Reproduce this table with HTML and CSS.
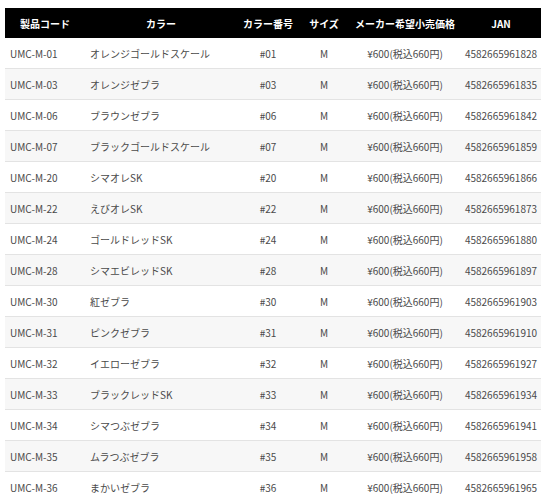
FILE: index.html
```html
<!DOCTYPE html>
<html lang="ja">
<head>
<meta charset="utf-8">
<link rel="stylesheet" href="styles.css">
</head>
<body>
<table class="spec">
<colgroup>
<col class="c1"><col class="c2"><col class="c3"><col class="c4"><col class="c5"><col class="c6">
</colgroup>
<thead>
<tr><th>製品コード</th><th>カラー</th><th>カラー番号</th><th>サイズ</th><th>メーカー希望小売価格</th><th>JAN</th></tr>
</thead>
<tbody>
<tr><td class="l">UMC-M-01</td><td class="l">オレンジゴールドスケール</td><td>#01</td><td>M</td><td>¥600(税込660円)</td><td>4582665961828</td></tr>
<tr><td class="l">UMC-M-03</td><td class="l">オレンジゼブラ</td><td>#03</td><td>M</td><td>¥600(税込660円)</td><td>4582665961835</td></tr>
<tr><td class="l">UMC-M-06</td><td class="l">ブラウンゼブラ</td><td>#06</td><td>M</td><td>¥600(税込660円)</td><td>4582665961842</td></tr>
<tr><td class="l">UMC-M-07</td><td class="l">ブラックゴールドスケール</td><td>#07</td><td>M</td><td>¥600(税込660円)</td><td>4582665961859</td></tr>
<tr><td class="l">UMC-M-20</td><td class="l">シマオレSK</td><td>#20</td><td>M</td><td>¥600(税込660円)</td><td>4582665961866</td></tr>
<tr><td class="l">UMC-M-22</td><td class="l">えびオレSK</td><td>#22</td><td>M</td><td>¥600(税込660円)</td><td>4582665961873</td></tr>
<tr><td class="l">UMC-M-24</td><td class="l">ゴールドレッドSK</td><td>#24</td><td>M</td><td>¥600(税込660円)</td><td>4582665961880</td></tr>
<tr><td class="l">UMC-M-28</td><td class="l">シマエビレッドSK</td><td>#28</td><td>M</td><td>¥600(税込660円)</td><td>4582665961897</td></tr>
<tr><td class="l">UMC-M-30</td><td class="l">紅ゼブラ</td><td>#30</td><td>M</td><td>¥600(税込660円)</td><td>4582665961903</td></tr>
<tr><td class="l">UMC-M-31</td><td class="l">ピンクゼブラ</td><td>#31</td><td>M</td><td>¥600(税込660円)</td><td>4582665961910</td></tr>
<tr><td class="l">UMC-M-32</td><td class="l">イエローゼブラ</td><td>#32</td><td>M</td><td>¥600(税込660円)</td><td>4582665961927</td></tr>
<tr><td class="l">UMC-M-33</td><td class="l">ブラックレッドSK</td><td>#33</td><td>M</td><td>¥600(税込660円)</td><td>4582665961934</td></tr>
<tr><td class="l">UMC-M-34</td><td class="l">シマつぶゼブラ</td><td>#34</td><td>M</td><td>¥600(税込660円)</td><td>4582665961941</td></tr>
<tr><td class="l">UMC-M-35</td><td class="l">ムラつぶゼブラ</td><td>#35</td><td>M</td><td>¥600(税込660円)</td><td>4582665961958</td></tr>
<tr><td class="l">UMC-M-36</td><td class="l">まかいゼブラ</td><td>#36</td><td>M</td><td>¥600(税込660円)</td><td>4582665961965</td></tr>
</tbody>
</table>
</body>
</html>
```
FILE: styles.css
```css
html, body {
  margin: 0;
  padding: 0;
  background: #fff;
}
body {
  padding: 8px 15px 0 5px;
  font-family: "Noto Sans CJK JP", "Noto Sans", sans-serif;
  font-size: 10px;
  color: #4a4a4a;
}
.spec {
  width: 536px;
  border-collapse: collapse;
  table-layout: fixed;
}
.c1 { width: 80px; }
.c2 { width: 152px; }
.c3 { width: 62px; }
.c4 { width: 50px; }
.c5 { width: 112px; }
.c6 { width: 80px; }
.spec th {
  background: #000;
  color: #fff;
  font-weight: bold;
  height: 30px;
  padding: 0;
  text-align: center;
  vertical-align: middle;
  white-space: nowrap;
}
.spec td {
  height: 30px;
  padding: 0;
  text-align: center;
  vertical-align: middle;
  border-bottom: 1px solid #e3e3e3;
  white-space: nowrap;
}
.spec td.l {
  text-align: left;
  padding-left: 5px;
}
.spec tbody tr:nth-child(even) td {
  background: #f7f7f7;
}
```
